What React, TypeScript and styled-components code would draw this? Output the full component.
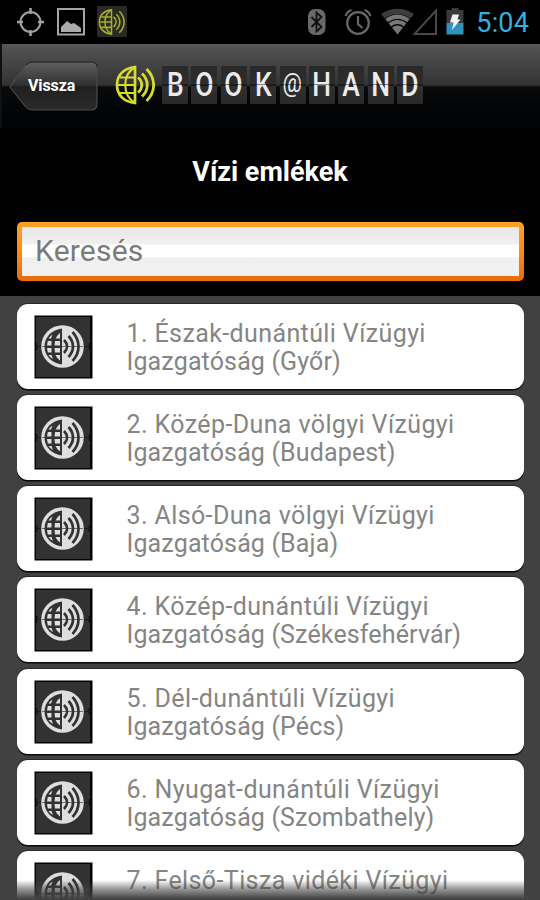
import React from 'react';
import styled, { createGlobalStyle } from 'styled-components';

const GlobalStyle = createGlobalStyle`
  body { margin: 0; background: #000; overflow: hidden; }
  * { box-sizing: border-box; }
`;

const Screen = styled.div`
  position: relative;
  width: 540px;
  height: 900px;
  overflow: hidden;
  display: flex;
  flex-direction: column;
  background: #000;
  font-family: Roboto, 'Liberation Sans', sans-serif;
`;

const StatusBar = styled.div`
  flex: none;
  height: 44px;
  display: flex;
  justify-content: space-between;
  padding-right: 11px;
`;

const StatusGroup = styled.div`
  display: flex;
`;

const Clock = styled.span`
  color: #35afdf;
  font-size: 27px;
  line-height: 46px;
  letter-spacing: 0.15px;
`;

const Header = styled.header`
  flex: none;
  height: 84px;
  display: flex;
  align-items: flex-start;
  padding: 16px 0 0 7px;
  border-left: 2px solid #101010;
  background: linear-gradient(#575757 0, #505050 5px, #333 41px, #090a0a 43px, #040507 60px, #020304 100%);
`;

const BackButton = styled.div`
  position: relative;
  width: 90px;
  height: 52px;
  display: flex;
  align-items: center;
  padding-left: 19px;
`;

const BackShape = styled.svg`
  position: absolute;
  inset: 0;
`;

const BackLabel = styled.span`
  position: relative;
  color: #fff;
  font-size: 16px;
  font-weight: 700;
  line-height: 20px;
  letter-spacing: -0.1px;
`;

const Brand = styled.div`
  display: flex;
  margin: 5px 0 0 16px;
`;

const Tiles = styled.div`
  display: flex;
  gap: 3.4px;
  margin: 1px 0 0 7px;
`;

const Tile = styled.span`
  position: relative;
  width: 26px;
  height: 38px;
  display: flex;
  align-items: flex-start;
  justify-content: center;
  background: linear-gradient(#292929, #2d2d2d 48%, #171717 49%, #171717 52%, #303030 53%, #292929);
  &::after {
    content: '';
    position: absolute;
    left: 0;
    right: 0;
    top: 18px;
    height: 1px;
    background: rgba(30, 30, 30, 0.5);
  }
`;

const Letter = styled.span<{ $small?: boolean }>`
  color: #ececec;
  font-size: ${(p) => (p.$small ? 25 : 33)}px;
  font-weight: ${(p) => (p.$small ? 400 : 500)};
  line-height: ${(p) => (p.$small ? 35 : 37)}px;
  transform: scaleX(${(p) => (p.$small ? 0.86 : 0.8)});
`;

const Title = styled.h1`
  flex: none;
  margin: 0;
  height: 94px;
  color: #fff;
  font-size: 27px;
  line-height: 88px;
  font-weight: 700;
  text-align: center;
`;

const SearchFrame = styled.div`
  flex: none;
  height: 59px;
  margin: 0 16px 15px 17px;
  padding: 5px;
  border-radius: 5px;
  background: linear-gradient(#fda128, #f98d19 50%, #e96b0a);
`;

const SearchField = styled.div`
  height: 49px;
  padding-left: 13px;
  color: #7b7b7b;
  font-size: 30px;
  line-height: 47px;
  letter-spacing: 0.2px;
  background: linear-gradient(#e8e8e8, #f0f0f0 17px, #fff 18px, #fff 30px, #efefef 31px, #f1f1f1);
`;

const List = styled.div`
  flex: 1;
  display: flex;
  flex-direction: column;
  gap: 6.15px;
  padding: 8px 16px 0 17px;
  overflow: hidden;
  background: #414141;
`;

const Card = styled.article`
  flex: none;
  height: 85px;
  display: flex;
  align-items: flex-start;
  padding: 11px 0 0 17px;
  border-radius: 11px;
  background: #fff;
  box-shadow: 0 1.5px 0 #090909, 0 -1px 0 #292929;
`;

const CardText = styled.div`
  display: flex;
  flex-direction: column;
  margin: 5px 0 0 33.5px;
  color: #858585;
  font-size: 25px;
  line-height: 28px;
  white-space: nowrap;
`;

const Line = styled.span<{ $tight?: boolean }>`
  letter-spacing: ${(p) => (p.$tight ? 0.14 : 0.39)}px;
`;

const BottomFade = styled.div`
  position: absolute;
  left: 0;
  right: 0;
  bottom: 0;
  height: 20px;
  background: linear-gradient(rgba(65, 65, 65, 0), rgba(65, 65, 65, 0.55) 45%, #414141 95%);
`;

const HalfGlobe = ({ size, color }: { size: number; color: string }) => (
  <svg width={size} height={size} viewBox="0 0 40 40" fill="none" stroke={color} strokeWidth="2.7">
    <path d="M20 2v36C9 37 2 30 2 20S9 3 20 2Z" />
    <path d="M20 2C7 10 7 30 20 38M5 12.5h15M2 20h18M5 28h15" strokeWidth="2.1" />
    <path d="M23 12.5c5 4 5 11 0 15M27 8.500c7 6.500 7 16.500 0 23M31.500 4c9.500 9 9.500 23 0 32" strokeWidth="2.8" />
  </svg>
);

const Thumb = () => (
  <svg width="59" height="64" viewBox="0 0 59 64">
    <rect x=".5" y=".5" width="58" height="63" fill="#050505" />
    <rect x="2" y="2" width="54" height="60" fill="#303331" />
    <path d="M2 31.5h55" stroke="#1c1e1d" />
    <circle cx="28.5" cy="31.5" r="21.3" fill="#dededc" />
    <path d="M28 13.500C18 14.500 10.500 22 10.500 31.500S18 48.500 28 49.500Z" fill="#303331" />
    <path d="M26 18v5.500h-4.500q1.500-3.500 4.500-5.500ZM26 26v4.500h-5.500l.5-4.500ZM26 33v4.500h-5l-.5-4.500ZM26 40v5.500q-3-2-4.500-5.500ZM18.500 19.500l-1.500 4h-2.500q1.500-2.500 4-4ZM17.500 26v4.500h-4.500l.8-4.500ZM17.500 33v4.500h-3.700l-.8-4.500ZM17.500 40l1.500 4q-3-1.500-4.500-4Z" fill="#dededc" />
    <path d="M30 25c4 4 4 9 0 13M34.500 21c6 6.500 6 14.500 0 21M38.500 17c8 8.500 8 20.500 0 29" stroke="#303331" strokeWidth="2.7" fill="none" />
    <path d="M8 31.5h41" stroke="#303331" strokeOpacity=".65" />
    <path d="M2.5 28v7M55.5 28v7" stroke="#111" strokeWidth="1.5" />
  </svg>
);

const NotificationIcons = () => (
  <svg width="130" height="44" viewBox="0 0 130 44" fill="none">
    <circle cx="30.5" cy="22" r="10" stroke="#a0a0a0" strokeWidth="2" />
    <path d="M30.5 8v6M30.5 30v6M17 22h6M38 22h6" stroke="#a0a0a0" strokeWidth="2.6" />
    <rect x="58" y="9" width="26" height="25.5" stroke="#a5a5a5" strokeWidth="2" />
    <path d="M61 32v-5l6-6 4 3 3-1 7 5v4Z" fill="#aaa" />
    <rect x="97" y="6" width="30" height="31" fill="#292a28" />
    <svg x="98" y="8" width="27" height="28" viewBox="0 0 40 40" stroke="#a8af22" strokeWidth="2.3">
      <path d="M20 2v36C9 37 2 30 2 20S9 3 20 2Z" />
      <path d="M20 2C7 10 7 30 20 38M5 12.5h15M2 20h18M5 28h15M23 12.5c5 4 5 11 0 15M27 8.5c7 6.5 7 16.5 0 23M31.5 4c9.5 9 9.5 23 0 32" />
    </svg>
  </svg>
);

const SystemIcons = () => (
  <svg width="177" height="44" viewBox="300 0 177 44" fill="none">
    <rect x="309" y="9" width="17.5" height="26" rx="7" fill="#696969" />
    <path d="M312.500 17l10 10-5 4.500v-19l5 4.500-10 10" stroke="#111" strokeWidth="1.8" />
    <circle cx="359" cy="23" r="10.8" stroke="#686868" strokeWidth="2.2" />
    <path d="M359 16v8l4.500 4M346.500 16c1-3 3-5 6-6M371.500 16c-1-3-3-5-6-6" stroke="#686868" strokeWidth="2.2" />
    <path d="M382 14c10-7 23-7 33 0l-3.7 4.6c-8-6-17.6-6-25.6 0Z" fill="#3c3c3c" />
    <path d="M386.3 19c7.4-6 17-6 24.4 0l-2.7 3.3c-6-4.8-13-4.8-19 0ZM389.7 23.2c5.4-4.3 12.2-4.3 17.6 0l-2.6 3.3c-4-3.2-8.4-3.2-12.4 0ZM393 27.4c3.4-2.7 7.6-2.7 11 0L398.500 34.500Z" fill="#777" />
    <path d="M415.500 34H437V10.500Z" stroke="#484848" strokeWidth="2" />
    <path d="M447.500 10h5V8h7v2h5v13h-17Z" fill="#3b3b3b" />
    <path d="M447.500 23h17v11.500h-17Z" fill="#2f94bd" />
    <path d="M453.500 14.500h6.500l-1.500 5h3L453 30l1.500-7.500H451Z" fill="#f4f4f4" />
  </svg>
);

const entries: [string, string?][] = [
  ['1. Észak-dunántúli Vízügyi', 'Igazgatóság (Győr)'],
  ['2. Közép-Duna völgyi Vízügyi', 'Igazgatóság (Budapest)'],
  ['3. Alsó-Duna völgyi Vízügyi', 'Igazgatóság (Baja)'],
  ['4. Közép-dunántúli Vízügyi', 'Igazgatóság (Székesfehérvár)'],
  ['5. Dél-dunántúli Vízügyi', 'Igazgatóság (Pécs)'],
  ['6. Nyugat-dunántúli Vízügyi', 'Igazgatóság (Szombathely)'],
  ['7. Felső-Tisza vidéki Vízügyi'],
];

export default function App() {
  return (
    <Screen>
      <GlobalStyle />
      <StatusBar>
        <NotificationIcons />
        <StatusGroup>
          <SystemIcons />
          <Clock>5:04</Clock>
        </StatusGroup>
      </StatusBar>
      <Header>
        <BackButton>
          <BackShape width="90" height="52" viewBox="0 0 90 52">
            <defs>
              <linearGradient id="back" x1="0" y1="0" x2="0" y2="1">
                <stop offset="0" stopColor="#606060" />
                <stop offset=".48" stopColor="#303030" />
                <stop offset=".52" stopColor="#202020" />
                <stop offset="1" stopColor="#2a2a2a" />
              </linearGradient>
            </defs>
            <path d="M1 27 16 6q3-4 8-4h58q6 0 6 6v36q0 6-6 6H24q-5 0-8-4Z" fill="url(#back)" stroke="#4a4a4a" strokeWidth="1.2" />
            <path d="M17 5q3-3 7-3h58q6 0 6 5" fill="none" stroke="#222" />
          </BackShape>
          <BackLabel>Vissza</BackLabel>
        </BackButton>
        <Brand>
          <HalfGlobe size={40} color="#d6dc2c" />
          <Tiles>
            {'BOOK@HAND'.split('').map((c, i) => (
              <Tile key={i}>
                <Letter $small={c === '@'}>{c}</Letter>
              </Tile>
            ))}
          </Tiles>
        </Brand>
      </Header>
      <Title>Vízi emlékek</Title>
      <SearchFrame>
        <SearchField>Keresés</SearchField>
      </SearchFrame>
      <List>
        {entries.map(([first, second]) => (
          <Card key={first}>
            <Thumb />
            <CardText>
              <Line>{first}</Line>
              {second && <Line $tight>{second}</Line>}
            </CardText>
          </Card>
        ))}
      </List>
      <BottomFade />
    </Screen>
  );
}
